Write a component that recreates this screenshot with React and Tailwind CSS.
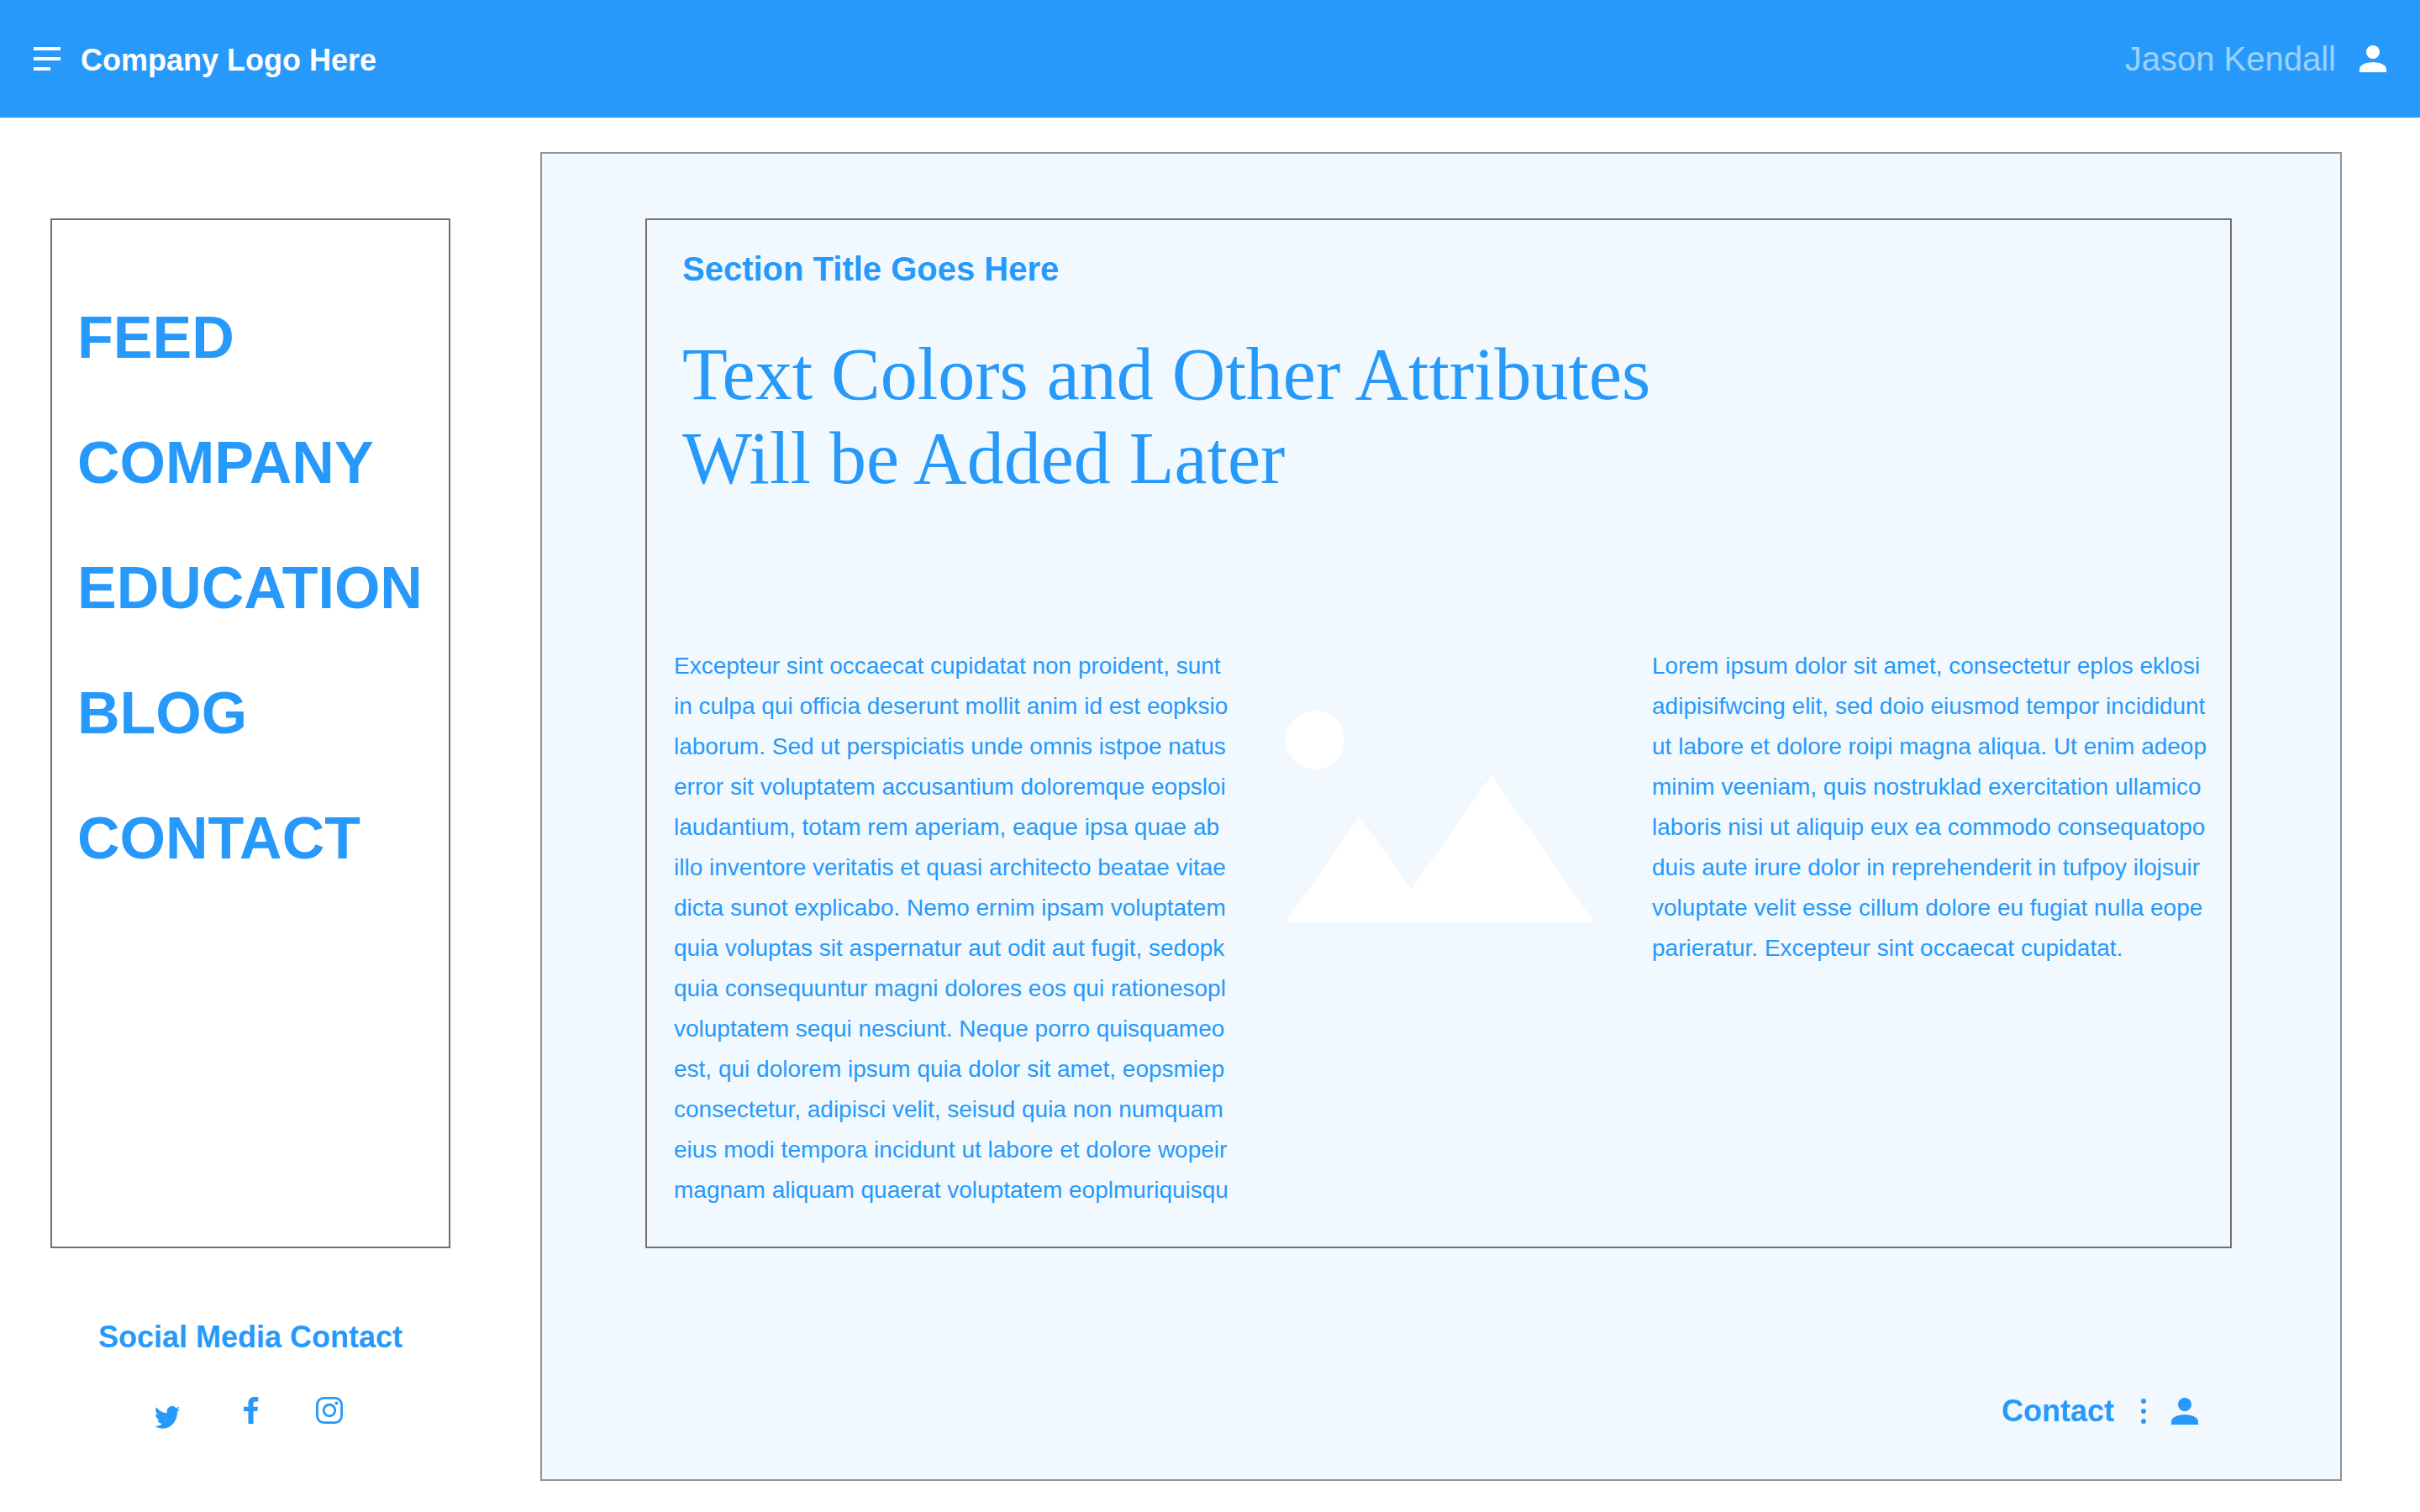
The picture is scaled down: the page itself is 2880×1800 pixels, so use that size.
import React from "react";

const NAV = ["FEED", "COMPANY", "EDUCATION", "BLOG", "CONTACT"];

const LEFT_LINES = [
  "Excepteur sint occaecat cupidatat non proident, sunt",
  "in culpa qui officia deserunt mollit anim id est eopksio",
  "laborum. Sed ut perspiciatis unde omnis istpoe natus",
  "error sit voluptatem accusantium doloremque eopsloi",
  "laudantium, totam rem aperiam, eaque ipsa quae ab",
  "illo inventore veritatis et quasi architecto beatae vitae",
  "dicta sunot explicabo. Nemo ernim ipsam voluptatem",
  "quia voluptas sit aspernatur aut odit aut fugit, sedopk",
  "quia consequuntur magni dolores eos qui rationesopl",
  "voluptatem sequi nesciunt. Neque porro quisquameo",
  "est, qui dolorem ipsum quia dolor sit amet, eopsmiep",
  "consectetur, adipisci velit, seisud quia non numquam",
  "eius modi tempora incidunt ut labore et dolore wopeir",
  "magnam aliquam quaerat voluptatem eoplmuriquisqu",
];

const RIGHT_LINES = [
  "Lorem ipsum dolor sit amet, consectetur eplos eklosi",
  "adipisifwcing elit, sed doio eiusmod tempor incididunt",
  "ut labore et dolore roipi magna aliqua. Ut enim adeop",
  "minim veeniam, quis nostruklad exercitation ullamico",
  "laboris nisi ut aliquip eux ea commodo consequatopo",
  "duis aute irure dolor in reprehenderit in tufpoy ilojsuir",
  "voluptate velit esse cillum dolore eu fugiat nulla eope",
  "parieratur. Excepteur sint occaecat cupidatat.",
];

function UserIcon() {
  return (
    <svg className="size-8" viewBox="0 0 32 32" fill="currentColor" aria-hidden="true">
      <circle cx="16" cy="8" r="8" />
      <path d="M0 32v-3.500c0-5 7.500-8.500 16-8.500s16 3.500 16 8.500v3.500z" />
    </svg>
  );
}

function TwitterIcon() {
  return (
    <svg className="h-10 w-[38px]" viewBox="0 0 38 40" fill="currentColor" aria-hidden="true">
      <path
        transform="translate(0 7.900) scale(1.250 1.370)"
        d="M23.953 4.57a10 10 0 01-2.825.775 4.958 4.958 0 002.163-2.723c-.951.555-2.005.959-3.127 1.184a4.92 4.92 0 00-8.384 4.482C7.690 8.095 4.067 6.130 1.640 3.162a4.822 4.822 0 00-.666 2.475c0 1.710.870 3.213 2.188 4.096a4.904 4.904 0 01-2.228-.616v.060a4.923 4.923 0 003.946 4.827 4.996 4.996 0 01-2.212.085 4.936 4.936 0 004.604 3.417 9.867 9.867 0 01-6.102 2.105c-.390 0-.779-.023-1.170-.067a13.995 13.995 0 007.557 2.209c9.053 0 13.998-7.496 13.998-13.985 0-.210 0-.420-.015-.630A9.935 9.935 0 0024 4.590z"
      />
    </svg>
  );
}

function Paragraph({ lines }) {
  return (
    <p className="text-[28px] leading-12 whitespace-nowrap">
      {lines.map((line) => (
        <span key={line} className="block">
          {line}
        </span>
      ))}
    </p>
  );
}

export default function App() {
  return (
    <div className="min-h-screen bg-white font-['Liberation_Sans',Arial,sans-serif] text-[#2699fb]">
      <header className="flex h-[140px] items-baseline justify-between bg-[#2699fb] px-10 pt-[46px] text-white">
        <div className="flex items-baseline gap-6">
          <button type="button" aria-label="Menu">
            <svg className="h-7 w-8" viewBox="0 0 32 28" fill="currentColor" aria-hidden="true">
              <path d="M0 0h32v4H0zM0 12h32v4H0zM0 24h20v4H0z" />
            </svg>
          </button>
          <a href="#home" className="text-[36px] leading-10 font-bold">
            Company Logo Here
          </a>
        </div>
        <div className="flex items-center gap-7">
          <span className="text-[40px] leading-12 text-white/55">Jason Kendall</span>
          <button type="button" aria-label="Account">
            <UserIcon />
          </button>
        </div>
      </header>

      <div className="flex pt-[41px] pr-[93px] pb-9 pl-[60px]">
        <aside className="mr-[107px] w-[476px] shrink-0 pt-[79px]">
          <nav className="flex h-[1226px] flex-col gap-[69px] border-2 border-[#707070] pt-[100px] pl-[30px]">
            {NAV.map((item) => (
              <a key={item} href={"#" + item.toLowerCase()} className="text-[70px] leading-20 font-bold">
                {item}
              </a>
            ))}
          </nav>
          <h2 className="mt-[86px] text-center text-[36px] leading-10 font-bold">Social Media Contact</h2>
          <div className="mt-[51px] flex items-start gap-[68px] pl-[124px]">
            <a href="#twitter" aria-label="Twitter">
              <TwitterIcon />
            </a>
            <a href="#facebook" aria-label="Facebook">
              <svg className="h-8 w-[18px]" viewBox="0 0 18 32" fill="currentColor" aria-hidden="true">
                <path d="M5.500 32V17H0v-5.300h5.500V7.500C5.500 2.500 8.500 0 13 0c2 0 3.800.15 4.300.2v5.300h-3c-2.400 0-2.800 1.100-2.800 2.800v3.400H17l-.800 5.300h-4.700v15z" />
              </svg>
            </a>
            <a href="#instagram" aria-label="Instagram">
              <svg className="size-8" viewBox="0 0 32 32" fill="none" stroke="currentColor" strokeWidth="2.800" aria-hidden="true">
                <rect x="1.400" y="1.400" width="29.200" height="29.200" rx="8" />
                <circle cx="16" cy="16" r="6.800" />
                <circle cx="24.500" cy="7.500" r="1.900" fill="currentColor" stroke="none" />
              </svg>
            </a>
          </div>
        </aside>

        <main className="flex-1 border-2 border-[#919598] bg-[#f1f9ff] pt-[77px] pr-[129px] pb-[61px] pl-[123px]">
          <article className="h-[1226px] border-2 border-[#707070] pt-[34px]">
            <h2 className="pl-[42px] text-[40px] leading-12 font-bold">Section Title Goes Here</h2>
            <h1 className="mt-[52px] pl-[42px] font-['Liberation_Serif',serif] text-[88px] leading-[100px]">
              Text Colors and Other Attributes
              <br />
              Will be Added Later
            </h1>
            <div className="mt-[173px] flex justify-between pr-7 pl-8">
              <Paragraph lines={LEFT_LINES} />
              <svg className="mt-[77px] h-[252px] w-[367px]" viewBox="0 0 367 252" fill="#ffffff" role="img" aria-label="Image placeholder">
                <circle cx="35" cy="35" r="35" />
                <path d="M0 252 88 126 149.500 213 245 77 367 252z" />
              </svg>
              <Paragraph lines={RIGHT_LINES} />
            </div>
          </article>
          <footer className="mt-[174px] flex items-center justify-end pr-10">
            <a href="#contact" className="text-[36px] leading-10 font-bold">
              Contact
            </a>
            <button type="button" aria-label="More options" className="mr-[30px] ml-8">
              <svg className="h-[30px] w-1.5" viewBox="0 0 6 30" fill="currentColor" aria-hidden="true">
                <circle cx="3" cy="3" r="3" />
                <circle cx="3" cy="15" r="3" />
                <circle cx="3" cy="27" r="3" />
              </svg>
            </button>
            <button type="button" aria-label="Contact profile">
              <UserIcon />
            </button>
          </footer>
        </main>
      </div>
    </div>
  );
}
